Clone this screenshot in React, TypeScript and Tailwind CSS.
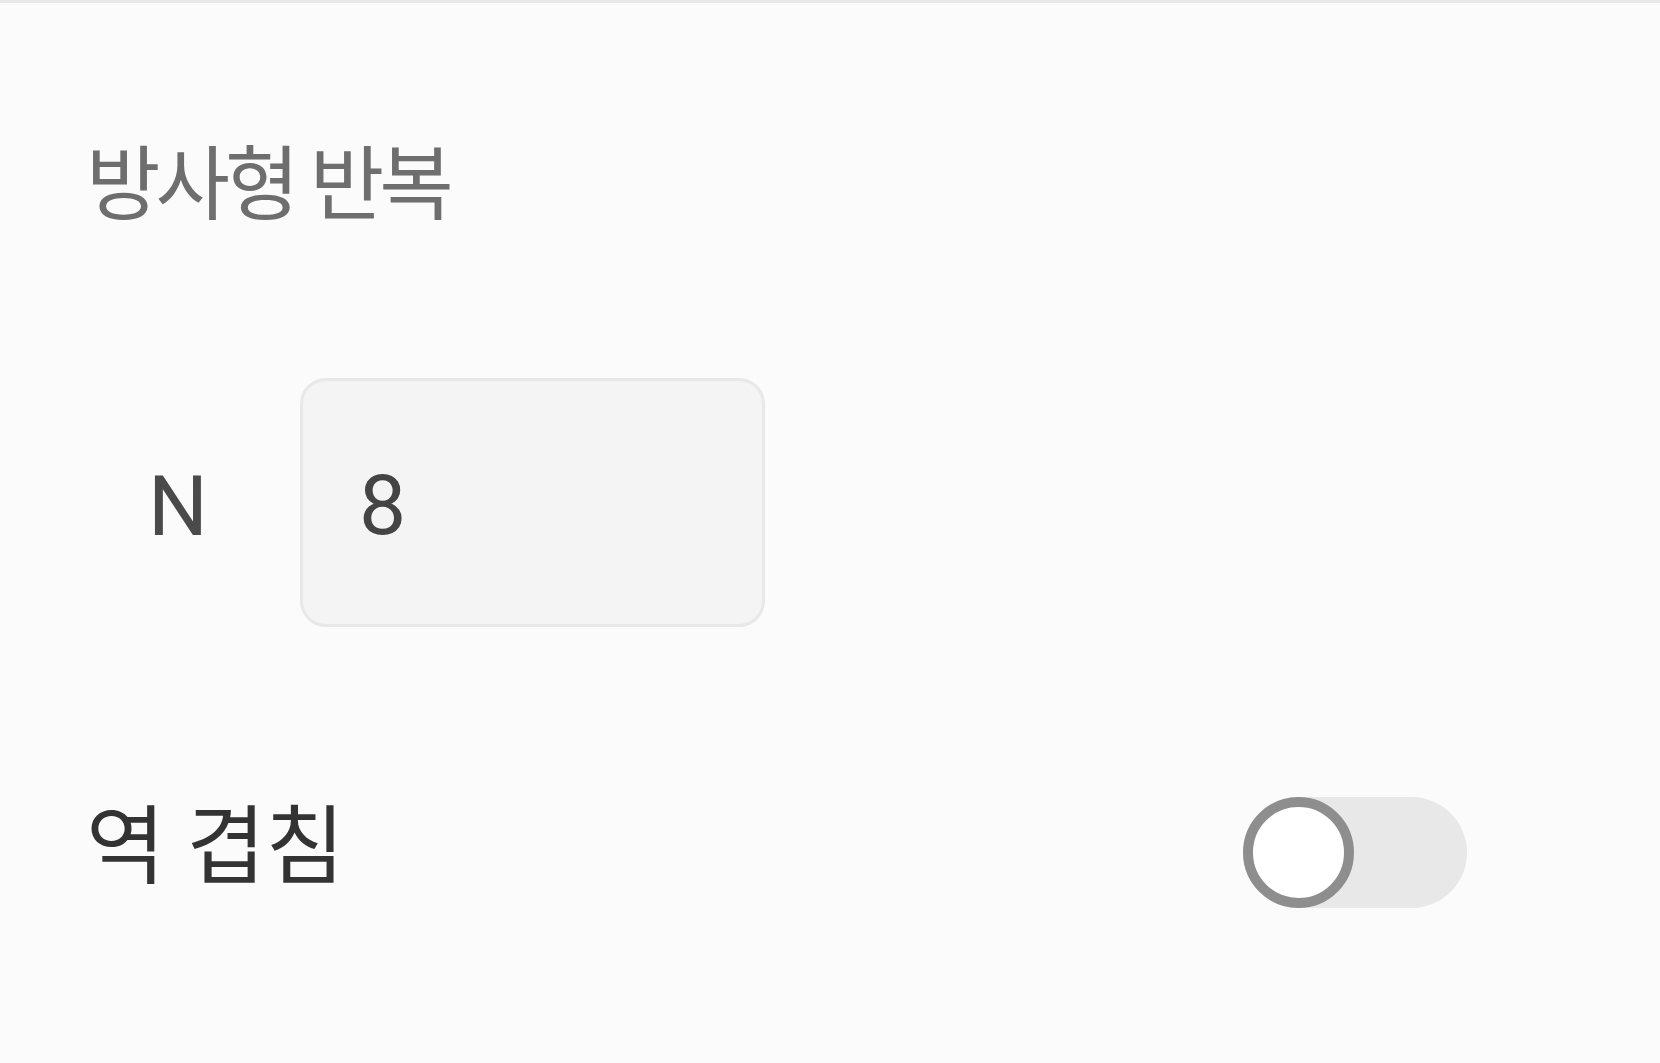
import { useState } from 'react';

export default function App() {
    const [count, setCount] = useState('8');
    const [reverse, setReverse] = useState(false);

    return (
        <div
            className="min-h-screen w-full bg-[#fbfbfb] border-t-[3px] border-[#e8e8e8]"
            style={{ fontFamily: "Roboto, 'Noto Sans CJK KR', sans-serif" }}
        >
            <div className="pl-[86px] pr-[193px] pt-[142px]">
                {/* Section title */}
                <h2 className="text-[81px] leading-none tracking-[-5px] font-normal text-[#6e6e6e]">방사형 반복</h2>

                {/* N input row */}
                <div className="flex items-center mt-[152px] ml-[4px]">
                    <label className="ml-[58px] w-[152px] pt-[8px] text-[84px] leading-none text-[#4a4a4a]">N</label>
                    <input
                        value={count}
                        onChange={(e) => setCount(e.target.value)}
                        className="w-[465px] h-[249px] rounded-[26px] border-[3px] border-[#e8e8e8] bg-[#f4f4f4] pl-[56px] pt-[6px] text-[84px] text-[#444444] outline-none"
                    />
                </div>

                {/* Reverse overlap toggle */}
                <div className="flex items-center justify-between mt-[170px]">
                    <span className="pb-[10px] text-[86px] leading-none text-[#333333]">역 겹침</span>
                    <button
                        onClick={() => setReverse(!reverse)}
                        className={`relative w-[224px] h-[111px] rounded-full ${reverse ? 'bg-[#b8d4f5]' : 'bg-[#e8e8e8]'}`}
                    >
                        <span
                            className={`absolute top-0 ${reverse ? 'right-0' : 'left-0'} w-[111px] h-[111px] rounded-full bg-white border-[10px] border-[#8e8e8e]`}
                        />
                    </button>
                </div>
            </div>
        </div>
    );
}
